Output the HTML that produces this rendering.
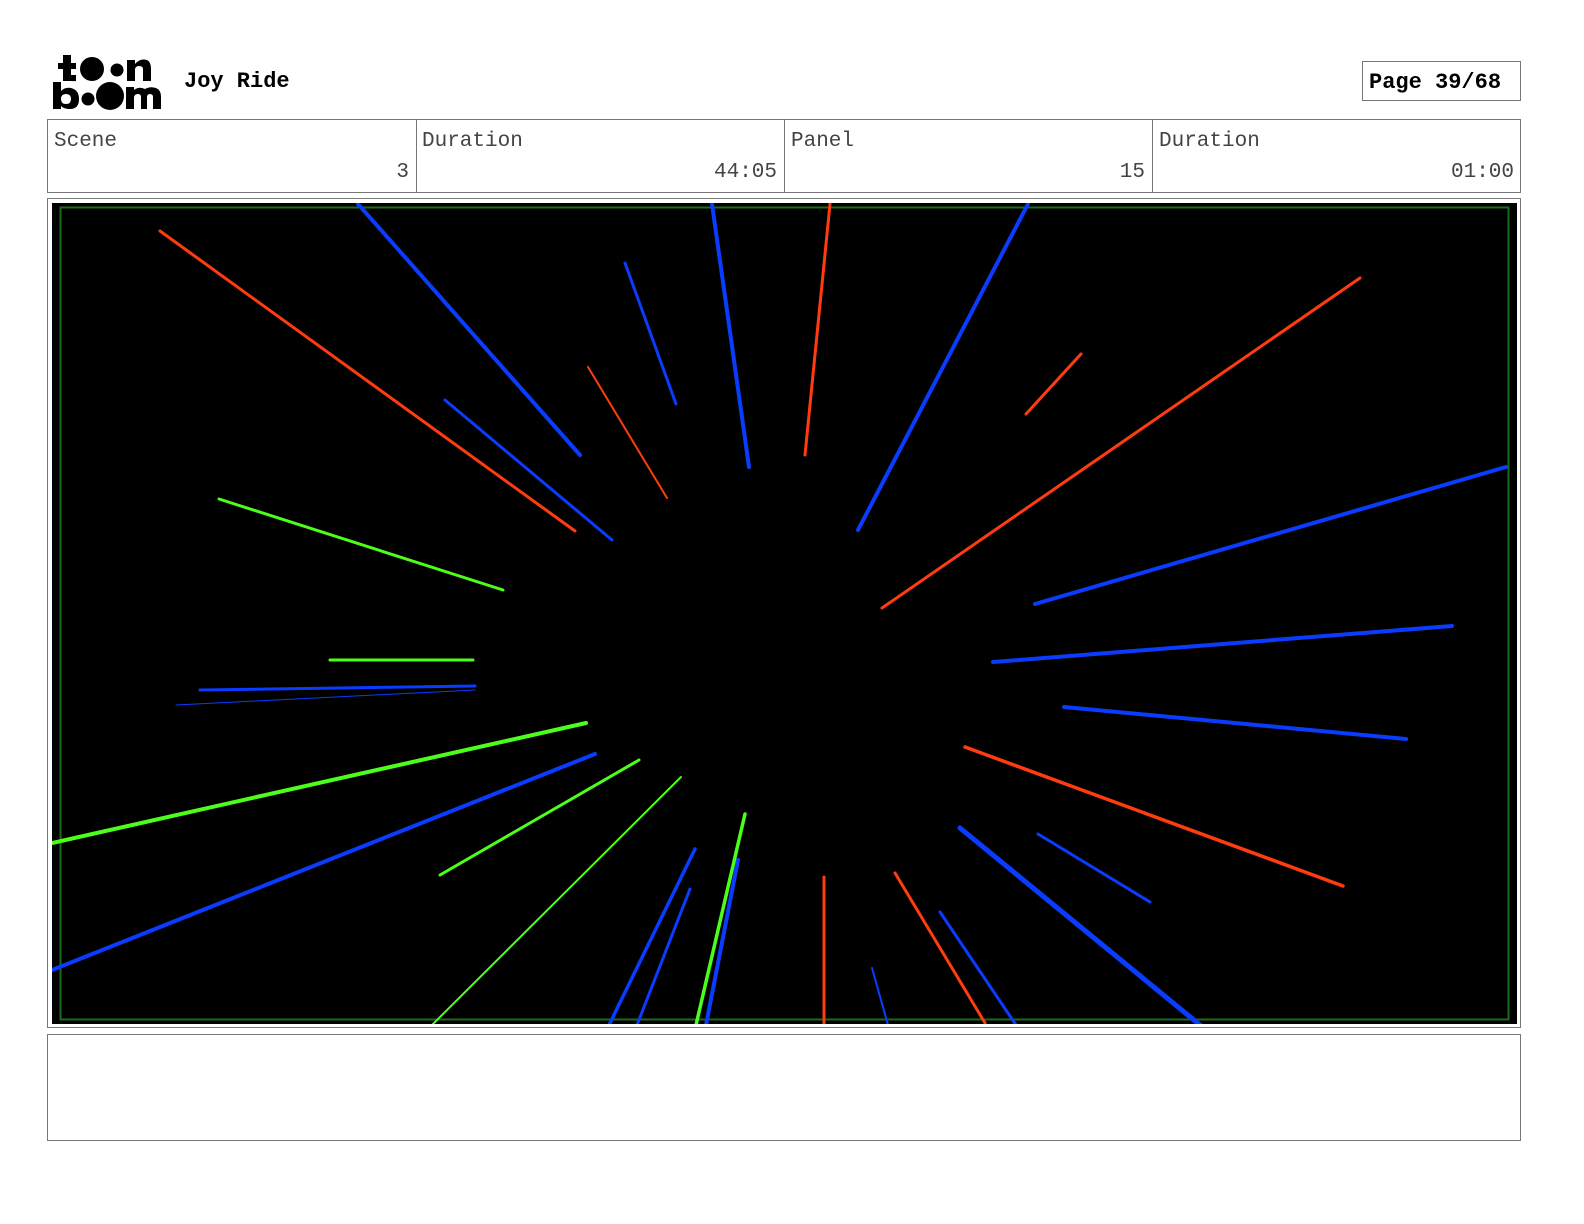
<!DOCTYPE html>
<html><head><meta charset="utf-8"><style>
html,body{margin:0;padding:0;background:#fff;width:1584px;height:1224px;overflow:hidden}
svg{position:absolute;left:0;top:0}
</style></head><body>
<svg width="1584" height="1224" viewBox="0 0 1584 1224" xmlns="http://www.w3.org/2000/svg">
<!-- logo -->
<g fill="#000">
<rect x="63" y="55" width="8" height="26"/><rect x="58" y="63" width="18" height="6"/>
<path d="M63 75 Q64 82 76 81 L76 75 Z"/>
<circle cx="92" cy="69" r="12"/><circle cx="117" cy="70" r="6.5"/>
<path d="M127 81 V60 H135 V64 Q140 58 147 60 Q151 62 151 69 V81 H143 V69 Q143 66 139 66 Q135 66 135 70 V81 Z"/>
<path d="M53 109 V82 H61 V91 Q65 87 71 88 Q79 90 79 99 Q79 109 70 109 Q64 109 61 106 V109 Z M66 94 Q61 94 61 99 Q61 104 66 104 Q71 104 71 99 Q71 94 66 94 Z"/>
<circle cx="88" cy="99" r="6.5"/><circle cx="110" cy="96" r="14"/>
<path d="M126 109 V87 H134 V90 Q139 86 145 89 Q150 86 156 88 Q161 90 161 97 V109 H153 V97 Q153 94 150 94 Q147 94 147 97 V109 H141 V97 Q141 94 138 94 Q134 94 134 98 V109 Z"/>
</g>
<text x="184" y="87" font-family="Liberation Mono, monospace" font-weight="bold" font-size="22">Joy Ride</text>
<rect x="1362.5" y="61.5" width="158" height="39" fill="#fff" stroke="#777"/>
<text x="1369" y="88" font-family="Liberation Mono, monospace" font-weight="bold" font-size="22">Page 39/68</text>
<!-- header table -->
<rect x="47.5" y="119.5" width="1473" height="73" fill="#fff" stroke="#777"/>
<g stroke="#777"><line x1="416.5" y1="120" x2="416.5" y2="192"/><line x1="784.5" y1="120" x2="784.5" y2="192"/><line x1="1152.5" y1="120" x2="1152.5" y2="192"/></g>
<g font-family="Liberation Mono, monospace" font-size="21" fill="#444">
<text x="54" y="146">Scene</text><text x="422" y="146">Duration</text><text x="791" y="146">Panel</text><text x="1159" y="146">Duration</text>
<text x="409" y="177" text-anchor="end">3</text><text x="777" y="177" text-anchor="end">44:05</text><text x="1145" y="177" text-anchor="end">15</text><text x="1514" y="177" text-anchor="end">01:00</text>
</g>
<!-- panel -->
<rect x="47.5" y="198.5" width="1473" height="829" fill="#fff" stroke="#777"/>
<rect x="52" y="203" width="1465" height="821" fill="#000"/>
<defs><clipPath id="c"><rect x="52" y="203" width="1465" height="821"/></clipPath></defs>
<g clip-path="url(#c)" stroke-linecap="round" fill="none">
<rect x="60.5" y="207.5" width="1448" height="812" stroke="#1a6b1a" stroke-width="2"/>
<g stroke="#ff3c10">
<line x1="160" y1="231" x2="575" y2="531" stroke-width="3"/>
<line x1="588" y1="367" x2="667" y2="498" stroke-width="2"/>
<line x1="830" y1="204" x2="805" y2="455" stroke-width="3"/>
<line x1="1081" y1="354" x2="1026" y2="414" stroke-width="3"/>
<line x1="1360" y1="278" x2="882" y2="608" stroke-width="3"/>
<line x1="965" y1="747" x2="1343" y2="886" stroke-width="3.5"/>
<line x1="895" y1="873" x2="985" y2="1023" stroke-width="3"/>
<line x1="824" y1="877" x2="824" y2="1025" stroke-width="3"/>
</g>
<g stroke="#0a3cff">
<line x1="358" y1="204" x2="580" y2="455" stroke-width="4"/>
<line x1="445" y1="400" x2="612" y2="540" stroke-width="3"/>
<line x1="625" y1="263" x2="676" y2="404" stroke-width="3"/>
<line x1="712" y1="204" x2="749" y2="467" stroke-width="4"/>
<line x1="1028" y1="204" x2="858" y2="530" stroke-width="4"/>
<line x1="1506" y1="467" x2="1035" y2="604" stroke-width="4"/>
<line x1="1452" y1="626" x2="993" y2="662" stroke-width="4"/>
<line x1="1064" y1="707" x2="1406" y2="739" stroke-width="4"/>
<line x1="200" y1="690" x2="475" y2="686" stroke-width="3"/>
<line x1="176" y1="705" x2="475" y2="690" stroke-width="1"/>
<line x1="595" y1="754" x2="52" y2="970" stroke-width="4"/>
<line x1="960" y1="828" x2="1200" y2="1025" stroke-width="5"/>
<line x1="1038" y1="834" x2="1150" y2="902" stroke-width="3"/>
<line x1="940" y1="912" x2="1016" y2="1025" stroke-width="3"/>
<line x1="872" y1="968" x2="888" y2="1025" stroke-width="2"/>
<line x1="695" y1="849" x2="609" y2="1025" stroke-width="3.5"/>
<line x1="690" y1="889" x2="637" y2="1025" stroke-width="3"/>
<line x1="738" y1="860" x2="706" y2="1025" stroke-width="4"/>
</g>
<g stroke="#4cff1a">
<line x1="219" y1="499" x2="503" y2="590" stroke-width="3"/>
<line x1="330" y1="660" x2="473" y2="660" stroke-width="3"/>
<line x1="586" y1="723" x2="52" y2="843" stroke-width="4"/>
<line x1="639" y1="760" x2="440" y2="875" stroke-width="3"/>
<line x1="681" y1="777" x2="432" y2="1025" stroke-width="2"/>
<line x1="745" y1="814" x2="696" y2="1025" stroke-width="3.5"/>
</g>
</g>
<!-- notes box -->
<rect x="47.5" y="1034.5" width="1473" height="106" fill="#fff" stroke="#777"/>
</svg>
</body></html>
